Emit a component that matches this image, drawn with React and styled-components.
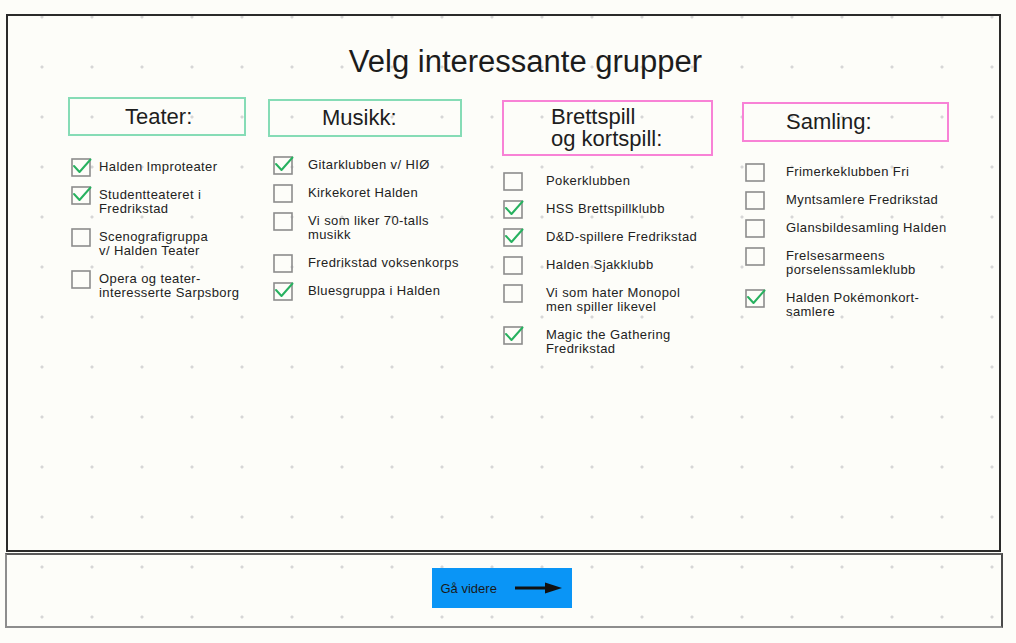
import styled, { createGlobalStyle } from 'styled-components';

const GlobalStyle = createGlobalStyle`
  html, body {
    margin: 0;
    padding: 0;
  }
  body {
    background-color: #fdfdf9;
    background-image: radial-gradient(circle, #d6d6d6 1.3px, transparent 1.8px);
    background-size: 50px 50px;
    background-position: 17px -8px;
    font-family: "Liberation Sans", Arial, sans-serif;
    color: #222;
    min-height: 643px;
  }
`;

const Page = styled.div`
  padding: 14px 0 0 6px;
`;

const Frame = styled.div`
  box-sizing: border-box;
  width: 995px;
  height: 538px;
  border: 2px solid #2a2a2a;
  padding-left: 60px;
`;

const Title = styled.h1`
  margin: 28px 0 0 0;
  padding-right: 16px;
  text-align: center;
  font-weight: 400;
  font-size: 31px;
  line-height: 36px;
  color: #1c1c1c;
`;

const Columns = styled.div`
  display: grid;
  grid-template-columns: 200px 234px 240px 1fr;
  align-items: start;
  margin-top: 17px;
`;

const Column = styled.div`
  display: flex;
  flex-direction: column;
  margin-top: ${(p) => p.$top}px;
`;

const Header = styled.div`
  box-sizing: border-box;
  width: ${(p) => p.$width}px;
  height: ${(p) => p.$height}px;
  border: 2px solid ${(p) => (p.$pink ? '#f882d6' : '#86dcb6')};
  padding-left: ${(p) => p.$pad}px;
  display: flex;
  align-items: center;
  font-size: 22px;
  line-height: 22px;
  color: #1e1e1e;
`;

const List = styled.div`
  display: flex;
  flex-direction: column;
  gap: 14px;
  margin-top: ${(p) => p.$top}px;
  padding-left: ${(p) => p.$indent}px;
`;

const Row = styled.label`
  display: flex;
  align-items: flex-start;
  gap: ${(p) => p.$gap}px;
`;

const Box = styled.svg`
  flex: none;
  width: 21px;
  height: 20px;
  margin: -3px 0 -3px;
  overflow: visible;
`;

const Label = styled.span`
  font-size: 13px;
  line-height: 14px;
  letter-spacing: 0.4px;
  color: #222;
  white-space: pre-line;
`;

const BottomBar = styled.div`
  box-sizing: border-box;
  width: 998px;
  height: 75px;
  margin: 1px 0 0 -1px;
  border: 2px solid;
  border-color: #5a5a5a #4a4a4a #8d8d8d #8d8d8d;
  display: flex;
  align-items: center;
  justify-content: center;
`;

const NextButton = styled.button`
  box-sizing: border-box;
  width: 140px;
  height: 40px;
  margin: -5px 0 0 -5px;
  border: none;
  background: #0a95f6;
  display: flex;
  align-items: center;
  padding: 0 0 0 9px;
  gap: 18px;
  font-family: "Liberation Sans", Arial, sans-serif;
  font-size: 13px;
  color: #1a1a1a;
  cursor: pointer;
`;

function Checkbox({ checked }) {
  return (
    <Box viewBox="0 0 21 20">
      <rect x="1" y="2" width="18" height="17" fill="none" stroke="#8c8c8c" strokeWidth="1.6" />
      {checked && (
        <polyline
          points="3,9 8.5,15 19.5,2.5"
          fill="none"
          stroke="#27b15f"
          strokeWidth="2"
          strokeLinecap="round"
          strokeLinejoin="round"
        />
      )}
    </Box>
  );
}

const groups = [
  {
    title: 'Teater:',
    width: 178,
    height: 39,
    pad: 55,
    top: 0,
    listTop: 24,
    indent: 3,
    gap: 7,
    items: [
      ['Halden Improteater', true],
      ['Studentteateret i\nFredrikstad', true],
      ['Scenografigruppa\nv/ Halden Teater', false],
      ['Opera og teater-\ninteresserte Sarpsborg', false],
    ],
  },
  {
    title: 'Musikk:',
    width: 194,
    height: 38,
    pad: 52,
    top: 2,
    listTop: 21,
    indent: 5,
    gap: 14,
    items: [
      ['Gitarklubben v/ HIØ', true],
      ['Kirkekoret Halden', false],
      ['Vi som liker 70-talls\nmusikk', false],
      ['Fredrikstad voksenkorps', false],
      ['Bluesgruppa i Halden', true],
    ],
  },
  {
    title: 'Brettspill\nog kortspill:',
    width: 211,
    height: 56,
    pad: 47,
    top: 3,
    listTop: 18,
    indent: 1,
    gap: 22,
    pink: true,
    items: [
      ['Pokerklubben', false],
      ['HSS Brettspillklubb', true],
      ['D&D-spillere Fredrikstad', true],
      ['Halden Sjakklubb', false],
      ['Vi som hater Monopol\nmen spiller likevel', false],
      ['Magic the Gathering\nFredrikstad', true],
    ],
  },
  {
    title: 'Samling:',
    width: 207,
    height: 40,
    pad: 42,
    top: 5,
    listTop: 23,
    indent: 3,
    gap: 20,
    pink: true,
    items: [
      ['Frimerkeklubben Fri', false],
      ['Myntsamlere Fredrikstad', false],
      ['Glansbildesamling Halden', false],
      ['Frelsesarmeens\nporselenssamleklubb', false],
      ['Halden Pokémonkort-\nsamlere', true],
    ],
  },
];

function Arrow() {
  return (
    <svg width="48" height="14" viewBox="0 0 48 14">
      <line x1="0" y1="7" x2="32" y2="7" stroke="#111" strokeWidth="3" />
      <polygon points="30,1.5 47,7 30,12.5" fill="#111" />
    </svg>
  );
}

export default function App() {
  return (
    <>
      <GlobalStyle />
      <Page>
        <Frame>
          <Title>Velg interessante grupper</Title>
          <Columns>
            {groups.map((g) => (
              <Column key={g.title} $top={g.top}>
                <Header $width={g.width} $height={g.height} $pad={g.pad} $pink={g.pink}>
                  <span style={{ whiteSpace: 'pre-line' }}>{g.title}</span>
                </Header>
                <List $top={g.listTop} $indent={g.indent}>
                  {g.items.map(([text, checked]) => (
                    <Row key={text} $gap={g.gap}>
                      <Checkbox checked={checked} />
                      <Label>{text}</Label>
                    </Row>
                  ))}
                </List>
              </Column>
            ))}
          </Columns>
        </Frame>
        <BottomBar>
          <NextButton>
            Gå videre
            <Arrow />
          </NextButton>
        </BottomBar>
      </Page>
    </>
  );
}
